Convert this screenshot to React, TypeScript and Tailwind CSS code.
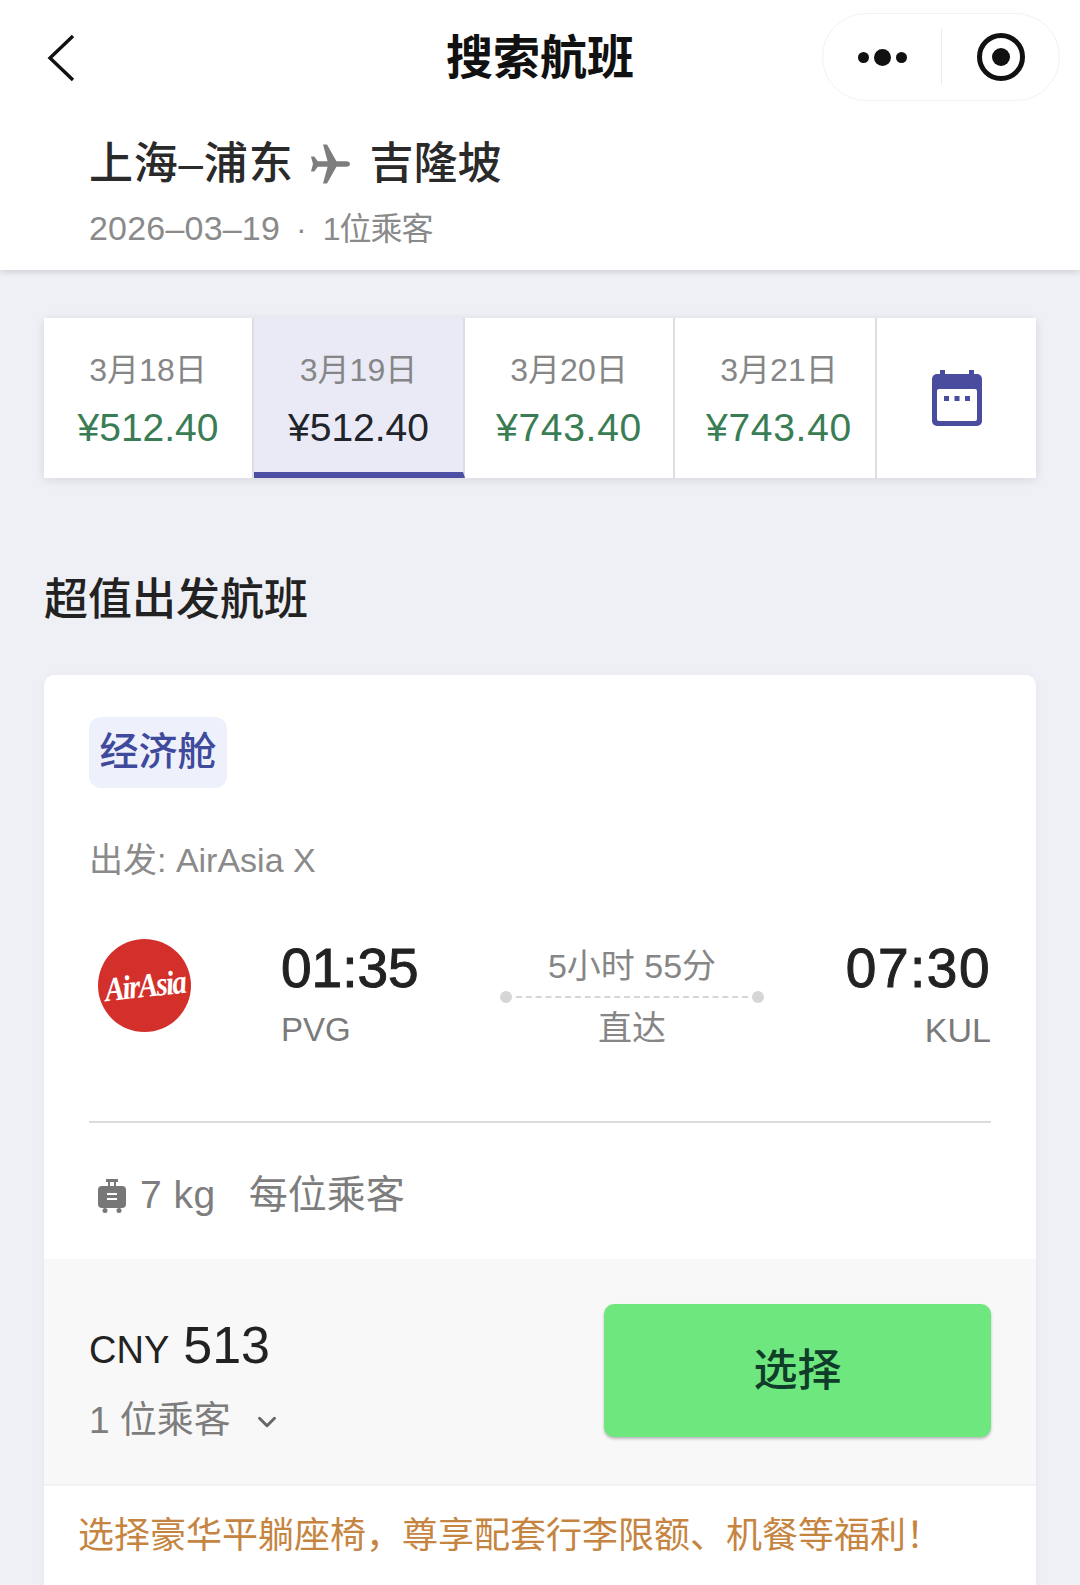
import React from 'react';
import { ChevronDown } from 'lucide-react';

const tabs = [
  { date: '3月18日', price: '¥512.40', width: 'w-[210px]', extra: '' },
  { date: '3月19日', price: '¥512.40', width: 'w-[211px]', extra: '', active: true },
  { date: '3月20日', price: '¥743.40', width: 'w-[210px]', extra: 'tracking-[0.7px]' },
  { date: '3月21日', price: '¥743.40', width: 'w-[202px] pl-[8px]', extra: 'tracking-[0.7px]' },
];

const BackArrow = () => (
  <svg width="30" height="48" viewBox="0 0 30 48" className="absolute left-[46px] top-[34px]">
    <path d="M27 2 4 24l23 22" fill="none" stroke="#111" strokeWidth="3.4" />
  </svg>
);

const Plane = () => (
  <svg width="48" height="48" viewBox="0 0 24 24" className="mx-[14px] shrink-0">
    <path
      fill="#7d7d7d"
      d="M21.5 12c0-.9-.8-1.4-1.7-1.4h-5.1L10 2.2H8l2.3 8.4H5.4L3.6 8.3H2l1 3.7-1 3.7h1.6l1.8-2.3h4.9L8 21.8h2l4.7-8.4h5.1c.9 0 1.7-.5 1.7-1.4z"
    />
  </svg>
);

const CalendarIcon = () => (
  <svg width="52" height="56" viewBox="0 0 52 56">
    <rect x="9" y="0" width="5" height="8" fill="#4a4d9e" />
    <rect x="38" y="0" width="5" height="8" fill="#4a4d9e" />
    <rect x="1" y="4" width="50" height="52" rx="5" fill="#4a4d9e" />
    <rect x="6" y="19" width="40" height="32" rx="2" fill="#fff" />
    <rect x="13" y="26" width="5" height="5" fill="#4a4d9e" />
    <rect x="23.5" y="26" width="5" height="5" fill="#4a4d9e" />
    <rect x="34" y="26" width="5" height="5" fill="#4a4d9e" />
  </svg>
);

const Luggage = () => (
  <svg width="30" height="36" viewBox="0 0 30 36">
    <path d="M9 1h12v3h-2v5h-2V4h-4v5H11V4H9z" fill="#777" />
    <rect x="1" y="8" width="28" height="22" rx="4" fill="#777" />
    <rect x="10" y="15" width="10" height="2" fill="#fff" />
    <rect x="10" y="20" width="10" height="2" fill="#fff" />
    <circle cx="8" cy="32.5" r="2.5" fill="#777" />
    <circle cx="22" cy="32.5" r="2.5" fill="#777" />
  </svg>
);

export default function App() {
  return (
    <div className="w-[1080px] h-[1585px] overflow-hidden bg-[#eef0f5] text-[#222] font-['Liberation_Sans','Noto_Sans_CJK_SC',sans-serif]">
      {/* header */}
      <div className="h-[270px] bg-white shadow-[0_2px_6px_rgba(0,0,0,0.14)]">
        <div className="relative h-[115px] flex items-center justify-center">
          <BackArrow />
          <h1 className="text-[47px] leading-none font-bold text-[#111]">搜索航班</h1>
          <div className="absolute left-[822px] top-[13px] w-[238px] h-[88px] rounded-full border border-[#f2f2f2] flex items-center">
            <div className="w-[118px] flex items-center justify-center gap-[5px]">
              <span className="w-[11px] h-[11px] rounded-full bg-[#111]" />
              <span className="w-[17px] h-[17px] rounded-full bg-[#111]" />
              <span className="w-[11px] h-[11px] rounded-full bg-[#111]" />
            </div>
            <div className="w-px h-[56px] bg-[#ececec]" />
            <div className="flex-1 flex items-center justify-center">
              <div className="w-[48px] h-[48px] rounded-full border-[5px] border-[#111] flex items-center justify-center">
                <span className="w-[18px] h-[18px] rounded-full bg-[#111]" />
              </div>
            </div>
          </div>
        </div>
        <div className="pl-[89px] pt-[17px]">
          <div className="flex items-center h-[64px] text-[44px] leading-none font-medium text-[#2a2a2a]">
            <span className="tracking-[0.8px]">上海–浦东</span>
            <Plane />
            <span>吉隆坡</span>
          </div>
          <p className="mt-[10px] flex items-baseline leading-[44px] text-[#8a8a8a]">
            <span className="text-[34px] tracking-[0.2px]">2026–03–19</span>
            <span className="mx-[16px] text-[32px]">·</span>
            <span className="text-[32px] tracking-[-1px]">1位乘客</span>
          </p>
        </div>
      </div>

      <div className="px-[44px]">
        {/* date tabs */}
        <div className="mt-[48px] h-[160px] flex bg-white shadow-[0_2px_10px_rgba(0,0,0,0.1)]">
          {tabs.map((t) => (
            <div
              key={t.date}
              className={`${t.width} flex flex-col items-center pt-[30px] border-r-2 border-[#dedede] ${t.active ? 'bg-[#e9eaf5] border-b-[6px] border-b-[#4c4fa3]' : ''}`}
            >
              <span className="text-[32px] leading-[44px] text-[#868686]">{t.date}</span>
              <span className={`mt-[12px] text-[39px] leading-[48px] ${t.extra} ${t.active ? 'text-[#22242c]' : 'text-[#3a7d55]'}`}>
                {t.price}
              </span>
            </div>
          ))}
          <div className="flex-1 flex items-center justify-center">
            <CalendarIcon />
          </div>
        </div>

        <h2 className="mt-[94px] text-[44px] leading-[56px] font-medium text-[#222]">超值出发航班</h2>

        {/* flight card */}
        <div className="mt-[47px] rounded-[10px] bg-white shadow-[0_2px_8px_rgba(0,0,0,0.05)]">
          <div className="px-[45px] pt-[42px]">
            <span className="inline-flex items-center justify-center w-[138px] h-[71px] rounded-[12px] bg-[#eef1fb] text-[39px] font-medium text-[#3f4a9c]">
              经济舱
            </span>
            <p className="mt-[50px] text-[34px] leading-[44px] text-[#8a8a8a]">出发: AirAsia X</p>

            <div className="mt-[54px] h-[124px] flex">
              <div className="w-[192px] pl-[9px] pt-[3px]">
                <div className="w-[93px] h-[93px] rounded-full bg-[#d3302c] flex items-center justify-center">
                  <span className="text-[34px] leading-none italic font-bold text-white tracking-[-2px] font-['Liberation_Serif',serif] [transform:rotate(-6deg)_scaleX(0.86)]">
                    AirAsia
                  </span>
                </div>
              </div>
              <div className="w-[200px]">
                <p className="text-[55px] leading-[64px] text-[#222] [-webkit-text-stroke:1px_#222]">01:35</p>
                <p className="mt-[8px] text-[33px] leading-[44px] text-[#7a7a7a]">PVG</p>
              </div>
              <div className="w-[302px] flex flex-col items-center px-[19px]">
                <p className="mt-[8px] text-[34px] leading-[44px] text-[#868686]">5小时 55分</p>
                <div className="w-full flex items-center my-[3px]">
                  <span className="w-[12px] h-[12px] rounded-full bg-[#d6d6d6] shrink-0" />
                  <span className="flex-1 mx-[4px] border-t-2 border-dashed border-[#d6d6d6]" />
                  <span className="w-[12px] h-[12px] rounded-full bg-[#d6d6d6] shrink-0" />
                </div>
                <p className="text-[34px] leading-[44px] text-[#868686]">直达</p>
              </div>
              <div className="flex-1 text-right">
                <p className="text-[55px] leading-[64px] tracking-[1.5px] text-[#222] [-webkit-text-stroke:1px_#222]">07:30</p>
                <p className="mt-[8px] text-[34px] leading-[44px] text-[#7a7a7a]">KUL</p>
              </div>
            </div>

            <div className="mt-[61px] border-t-2 border-[#dcdcdc]" />

            <div className="h-[136px] pt-[9px] flex items-center text-[39px] text-[#7d7d7d] pl-[8px]">
              <Luggage />
              <span className="ml-[13px] tracking-[0.5px]">7 kg</span>
              <span className="ml-[33px]">每位乘客</span>
            </div>
          </div>

          {/* price row */}
          <div className="h-[227px] bg-[#f8f8f8] px-[45px] flex items-center justify-between border-b-2 border-[#f2f2f2]">
            <div className="mt-[16px]">
              <p className="flex items-baseline text-[#222]">
                <span className="text-[38px] leading-none">CNY</span>
                <span className="ml-[14px] text-[52px] leading-[60px]">513</span>
              </p>
              <div className="mt-[22px] flex items-center text-[37px] leading-[48px] text-[#7d7d7d]">
                <span>1 位乘客</span>
                <ChevronDown size={30} strokeWidth={2.4} color="#666" className="ml-[21px] mt-[2px]" />
              </div>
            </div>
            <button className="w-[387px] h-[133px] mb-[2px] rounded-[10px] bg-[#6ee77f] shadow-[0_2px_3px_rgba(0,0,0,0.25)] text-[44px] font-medium text-[#0f3d2a]">
              选择
            </button>
          </div>

          <p className="pl-[34px] pt-[28px] pb-[80px] text-[36px] leading-[44px] text-[#c58440] whitespace-nowrap">
            选择豪华平躺座椅，尊享配套行李限额、机餐等福利！
          </p>
        </div>
      </div>
    </div>
  );
}
